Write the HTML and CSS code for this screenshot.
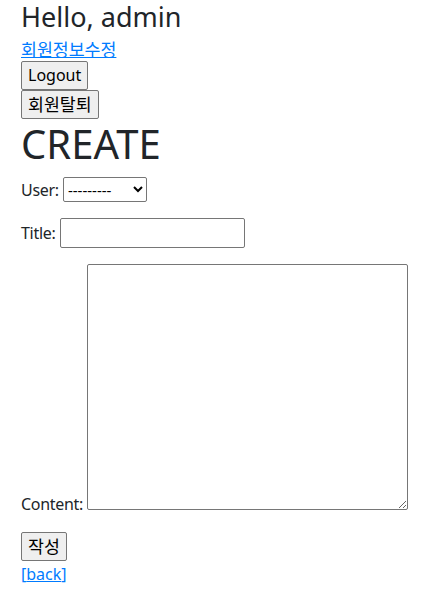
FILE: index.html
```html
<!DOCTYPE html>
<html lang="ko">
<head>
<meta charset="utf-8">
<title>Create</title>
<link rel="stylesheet" href="styles.css">
</head>
<body>
<div class="page">
  <h3 class="hello">Hello, admin</h3>
  <div class="linkrow"><a class="link ko" href="#">회원정보수정</a></div>
  <div class="btnrow"><button class="btn" type="button">Logout</button></div>
  <div class="btnrow"><button class="btn ko" type="button">회원탈퇴</button></div>
  <h1 class="title">CREATE</h1>
  <form class="form">
    <p class="field"><label class="lbl">User:</label> <select class="select"><option>---------</option></select></p>
    <p class="field"><label class="lbl">Title:</label> <input class="input" type="text"></p>
    <p class="field"><label class="lbl">Content:</label> <textarea class="textarea" rows="10"></textarea></p>
    <button class="btn ko" type="button">작성</button>
  </form>
  <div class="back"><a class="backlink" href="#">[<span class="u">back</span>]</a></div>
</div>
</body>
</html>
```
FILE: styles.css
```css
html, body { margin: 0; padding: 0; background: #fff; }
body {
  font-family: "Noto Sans", "Noto Sans CJK KR", sans-serif;
  font-size: 16px;
  line-height: 1.5;
  color: #212529;
}
.page { padding: 0 21px; }
.hello {
  margin: 0 0 4px;
  font-size: 27px;
  font-weight: 400;
  line-height: 34px;
}
.linkrow { height: 23px; line-height: 23px; }
.link { color: #007bff; text-decoration: underline; }
.ko { font-size: 17.3px; }
.btnrow { line-height: 0; }
.btn {
  font-family: "Noto Sans", "Noto Sans CJK KR", sans-serif;
  font-size: 16px;
  line-height: 25px;
  margin: 0;
  padding: 1px 6px;
  border: 1px solid #767676;
  border-radius: 2px;
  background: #efefef;
  color: #000;
}
.btn.ko { font-size: 17.3px; }
.title {
  margin: 1px 0 9px;
  font-size: 40px;
  font-weight: 400;
  line-height: 48px;
}
.form { margin: 0; }
.field { margin: 0 0 16px; }
.lbl { letter-spacing: -0.3px; }
.select {
  font-family: inherit;
  font-size: 15px;
  width: 84px;
  height: 25px;
  border: 1px solid #767676;
  border-radius: 2px;
  background: #fff;
  color: #000;
}
.input {
  font: inherit;
  width: 185px;
  height: 30px;
  box-sizing: border-box;
  padding: 1px 2px;
  border: 1px solid #767676;
  border-radius: 2px;
}
.textarea {
  font: inherit;
  width: 321px;
  height: 246px;
  box-sizing: border-box;
  padding: 2px;
  border: 1px solid #767676;
  border-radius: 2px;
  vertical-align: baseline;
  margin: 0;
}
.back { line-height: 24px; margin-top: 1px; }
.backlink { color: #007bff; text-decoration: none; }
.u { text-decoration: underline; }
```
